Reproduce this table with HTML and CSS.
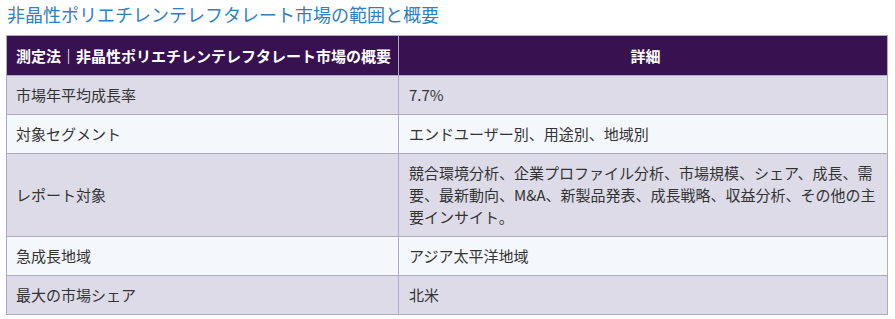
FILE: index.html
```html
<!DOCTYPE html>
<html lang="ja">
<head>
<meta charset="utf-8">
<title>非晶性ポリエチレンテレフタレート市場の範囲と概要</title>
<link rel="stylesheet" href="styles.css">
</head>
<body>
<div class="page">
  <h2 class="title">非晶性ポリエチレンテレフタレート市場の範囲と概要</h2>
  <table class="scope">
    <thead>
      <tr>
        <th class="col-a">測定法｜非晶性ポリエチレンテレフタレート市場の概要</th>
        <th class="col-b">詳細</th>
      </tr>
    </thead>
    <tbody>
      <tr><td>市場年平均成長率</td><td>7.7%</td></tr>
      <tr><td>対象セグメント</td><td>エンドユーザー別、用途別、地域別</td></tr>
      <tr><td>レポート対象</td><td>競合環境分析、企業プロファイル分析、市場規模、シェア、成長、需要、最新動向、M&amp;A、新製品発表、成長戦略、収益分析、その他の主要インサイト。</td></tr>
      <tr><td>急成長地域</td><td>アジア太平洋地域</td></tr>
      <tr><td>最大の市場シェア</td><td>北米</td></tr>
    </tbody>
  </table>
</div>
</body>
</html>
```
FILE: styles.css
```css
* { box-sizing: border-box; }
html, body { margin: 0; padding: 0; background: #ffffff; }
body {
  font-family: "Noto Sans CJK JP", "Noto Sans", sans-serif;
  color: #333333;
}
.page { padding: 2px 8px 0 6px; }
.title {
  margin: 0 0 9px 1px;
  font-size: 18px;
  font-weight: 400;
  line-height: 24px;
  color: #2f7fc1;
}
.scope {
  width: 882px;
  border-collapse: collapse;
  table-layout: fixed;
  font-size: 15px;
  line-height: 22px;
}
.scope th, .scope td {
  border: 1px solid #b1a8c6;
  padding: 8px 9px;
  text-align: left;
  vertical-align: middle;
}
.scope th {
  background: #371150;
  color: #ffffff;
  font-weight: 700;
  white-space: nowrap;
  padding: 9px 4px 8px 9px;
}
.scope .col-a { width: 392px; }
.scope .col-b { text-align: center; }
.scope tbody tr:nth-child(odd) td { background: #dedbe9; }
.scope tbody tr:nth-child(even) td { background: #f4f7fb; }
.scope td:last-child { padding-left: 10px; }
```
